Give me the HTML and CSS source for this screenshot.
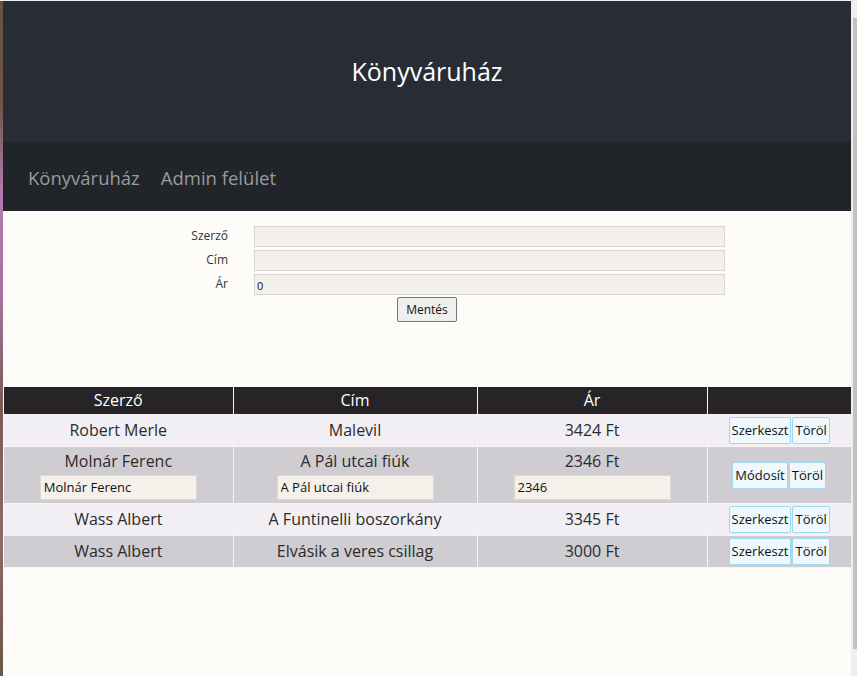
FILE: index.html
```html
<!DOCTYPE html>
<html lang="hu">
<head>
<meta charset="utf-8">
<title>Könyváruház</title>
<link rel="stylesheet" href="styles.css">
</head>
<body>
<div class="topline"></div>
<div class="frame">
  <div class="desk"></div>
  <div class="page">
    <header class="hero"><h1 class="hero-title">Könyváruház</h1></header>
    <nav class="navbar">
      <a class="nav-link" href="#">Könyváruház</a>
      <a class="nav-link" href="#">Admin felület</a>
    </nav>
    <form class="book-form">
      <label class="f-label">Szerző</label><input class="f-input" type="text" value="">
      <label class="f-label">Cím</label><input class="f-input" type="text" value="">
      <label class="f-label">Ár</label><input class="f-input" type="text" value="0">
      <div class="f-actions"><button class="save-btn" type="button">Mentés</button></div>
    </form>
    <table class="books">
      <colgroup><col class="c1"><col class="c2"><col class="c3"><col class="c4"></colgroup>
      <thead>
        <tr><th>Szerző</th><th>Cím</th><th>Ár</th><th></th></tr>
      </thead>
      <tbody>
        <tr class="odd">
          <td>Robert Merle</td><td>Malevil</td><td>3424 Ft</td>
          <td><div class="btns"><button class="tbtn">Szerkeszt</button><button class="tbtn">Töröl</button></div></td>
        </tr>
        <tr class="even edit">
          <td>Molnár Ferenc<input class="cell-input" type="text" value="Molnár Ferenc"></td>
          <td>A Pál utcai fiúk<input class="cell-input" type="text" value="A Pál utcai fiúk"></td>
          <td>2346 Ft<input class="cell-input" type="text" value="2346"></td>
          <td><div class="btns"><button class="tbtn">Módosít</button><button class="tbtn">Töröl</button></div></td>
        </tr>
        <tr class="odd">
          <td>Wass Albert</td><td>A Funtinelli boszorkány</td><td>3345 Ft</td>
          <td><div class="btns"><button class="tbtn">Szerkeszt</button><button class="tbtn">Töröl</button></div></td>
        </tr>
        <tr class="even">
          <td>Wass Albert</td><td>Elvásik a veres csillag</td><td>3000 Ft</td>
          <td><div class="btns"><button class="tbtn">Szerkeszt</button><button class="tbtn">Töröl</button></div></td>
        </tr>
      </tbody>
    </table>
  </div>
  <div class="scrollbar"><div class="sb-arrow"></div><div class="sb-thumb"></div></div>
</div>
</body>
</html>
```
FILE: styles.css
```css
* { box-sizing: border-box; }
html, body { margin: 0; padding: 0; }
body {
  width: 857px;
  height: 676px;
  overflow: hidden;
  background: #f0f0f0;
  font-family: "Open Sans", "Noto Sans", sans-serif;
}
.topline { height: 1px; background: #eeeeee; }
.frame {
  display: flex;
  height: 675px;
}
.desk {
  width: 3px;
  flex: none;
  background: linear-gradient(to bottom, #6a5240 0%, #6e5344 15%, #b27ab0 28%, #a6709a 45%, #7a5a55 60%, #8c6c66 80%, #6b5548 100%);
}
.page {
  width: 848px;
  flex: none;
  background: #fdfcf9;
}
.hero {
  height: 141px;
  background: #282c34;
  display: flex;
  align-items: center;
  justify-content: center;
}
.hero-title {
  margin: 0;
  font-size: 25px;
  font-weight: 400;
  color: #ffffff;
  padding-bottom: 1px;
}
.navbar {
  height: 69px;
  background: #212529;
  display: flex;
  align-items: center;
  gap: 21px;
  padding: 1px 0 0 25px;
}
.nav-link {
  color: #9a9b9d;
  text-decoration: none;
  font-size: 18.5px;
}
.book-form {
  display: grid;
  grid-template-columns: 80px 471px;
  column-gap: 26px;
  row-gap: 3px;
  margin: 15px 0 0 145px;
  width: 577px;
  align-items: center;
}
.f-label {
  text-align: right;
  font-size: 12px;
  color: #333333;
  padding-bottom: 3px;
}
.f-input {
  height: 21px;
  border: 1px solid #d9d6d3;
  background: #f3f0eb;
  font-family: inherit;
  font-size: 11px;
  padding: 2px 2px 0;
  color: #111;
}
.f-actions {
  grid-column: 1 / span 2;
  display: flex;
  justify-content: flex-start;
  padding-left: 249px;
  margin-top: -1px;
}
.save-btn {
  width: 60px;
  height: 25px;
  border: 1px solid #767676;
  border-radius: 2px;
  background: #efefef;
  font-family: inherit;
  font-size: 12px;
  color: #111;
  padding: 0;
}
.books {
  margin: 65px 0 0 1px;
  width: 847px;
  border-collapse: collapse;
  table-layout: fixed;
  font-size: 16px;
}
.c1 { width: 229px; }
.c2 { width: 244px; }
.c3 { width: 230px; }
.c4 { width: 144px; }
.books th {
  background: #262427;
  color: #ffffff;
  font-weight: 400;
  height: 27px;
  padding: 0 0 1px;
  border-left: 1px solid #fbf5f3;
  border-right: 1px solid #fbf5f3;
  border-bottom: 1px solid #fbf1f1;
}
.books th:first-child { border-left: none; }
.books th:last-child { border-right: none; }
.books td {
  text-align: center;
  color: #2b2b2b;
  padding: 2px 2px 2px;
  border: 1px solid #fbf1f1;
  line-height: 21px;
  height: 32px;
  vertical-align: middle;
}
.books td:first-child { border-left: none; }
.books td:last-child { border-right: none; }
.odd td { background: #f2eff4; }
.even td { background: #cfccd2; }
.edit td { padding-bottom: 3px; padding-top: 4px; }
.cell-input {
  display: block;
  width: 157px;
  height: 25px;
  margin: 3px auto 0;
  border: 1px solid #dcd8d3;
  background: #f5f0ea;
  font-family: inherit;
  font-size: 13px;
  color: #111;
  padding: 0 3px;
}
.btns {
  display: flex;
  justify-content: center;
  gap: 1px;
}
.tbtn {
  height: 27px;
  border: 1px solid #9fd8ee;
  border-radius: 2px;
  background: #eef8fd;
  font-family: inherit;
  font-size: 13px;
  color: #111;
  padding: 0 2px;
}
.scrollbar {
  width: 6px;
  flex: none;
  background: #eeeeee;
}
.sb-arrow {
  height: 17px;
}
.sb-thumb {
  margin-left: 2px;
  width: 4px;
  height: 631px;
  background: #c2c2c2;
}
```
